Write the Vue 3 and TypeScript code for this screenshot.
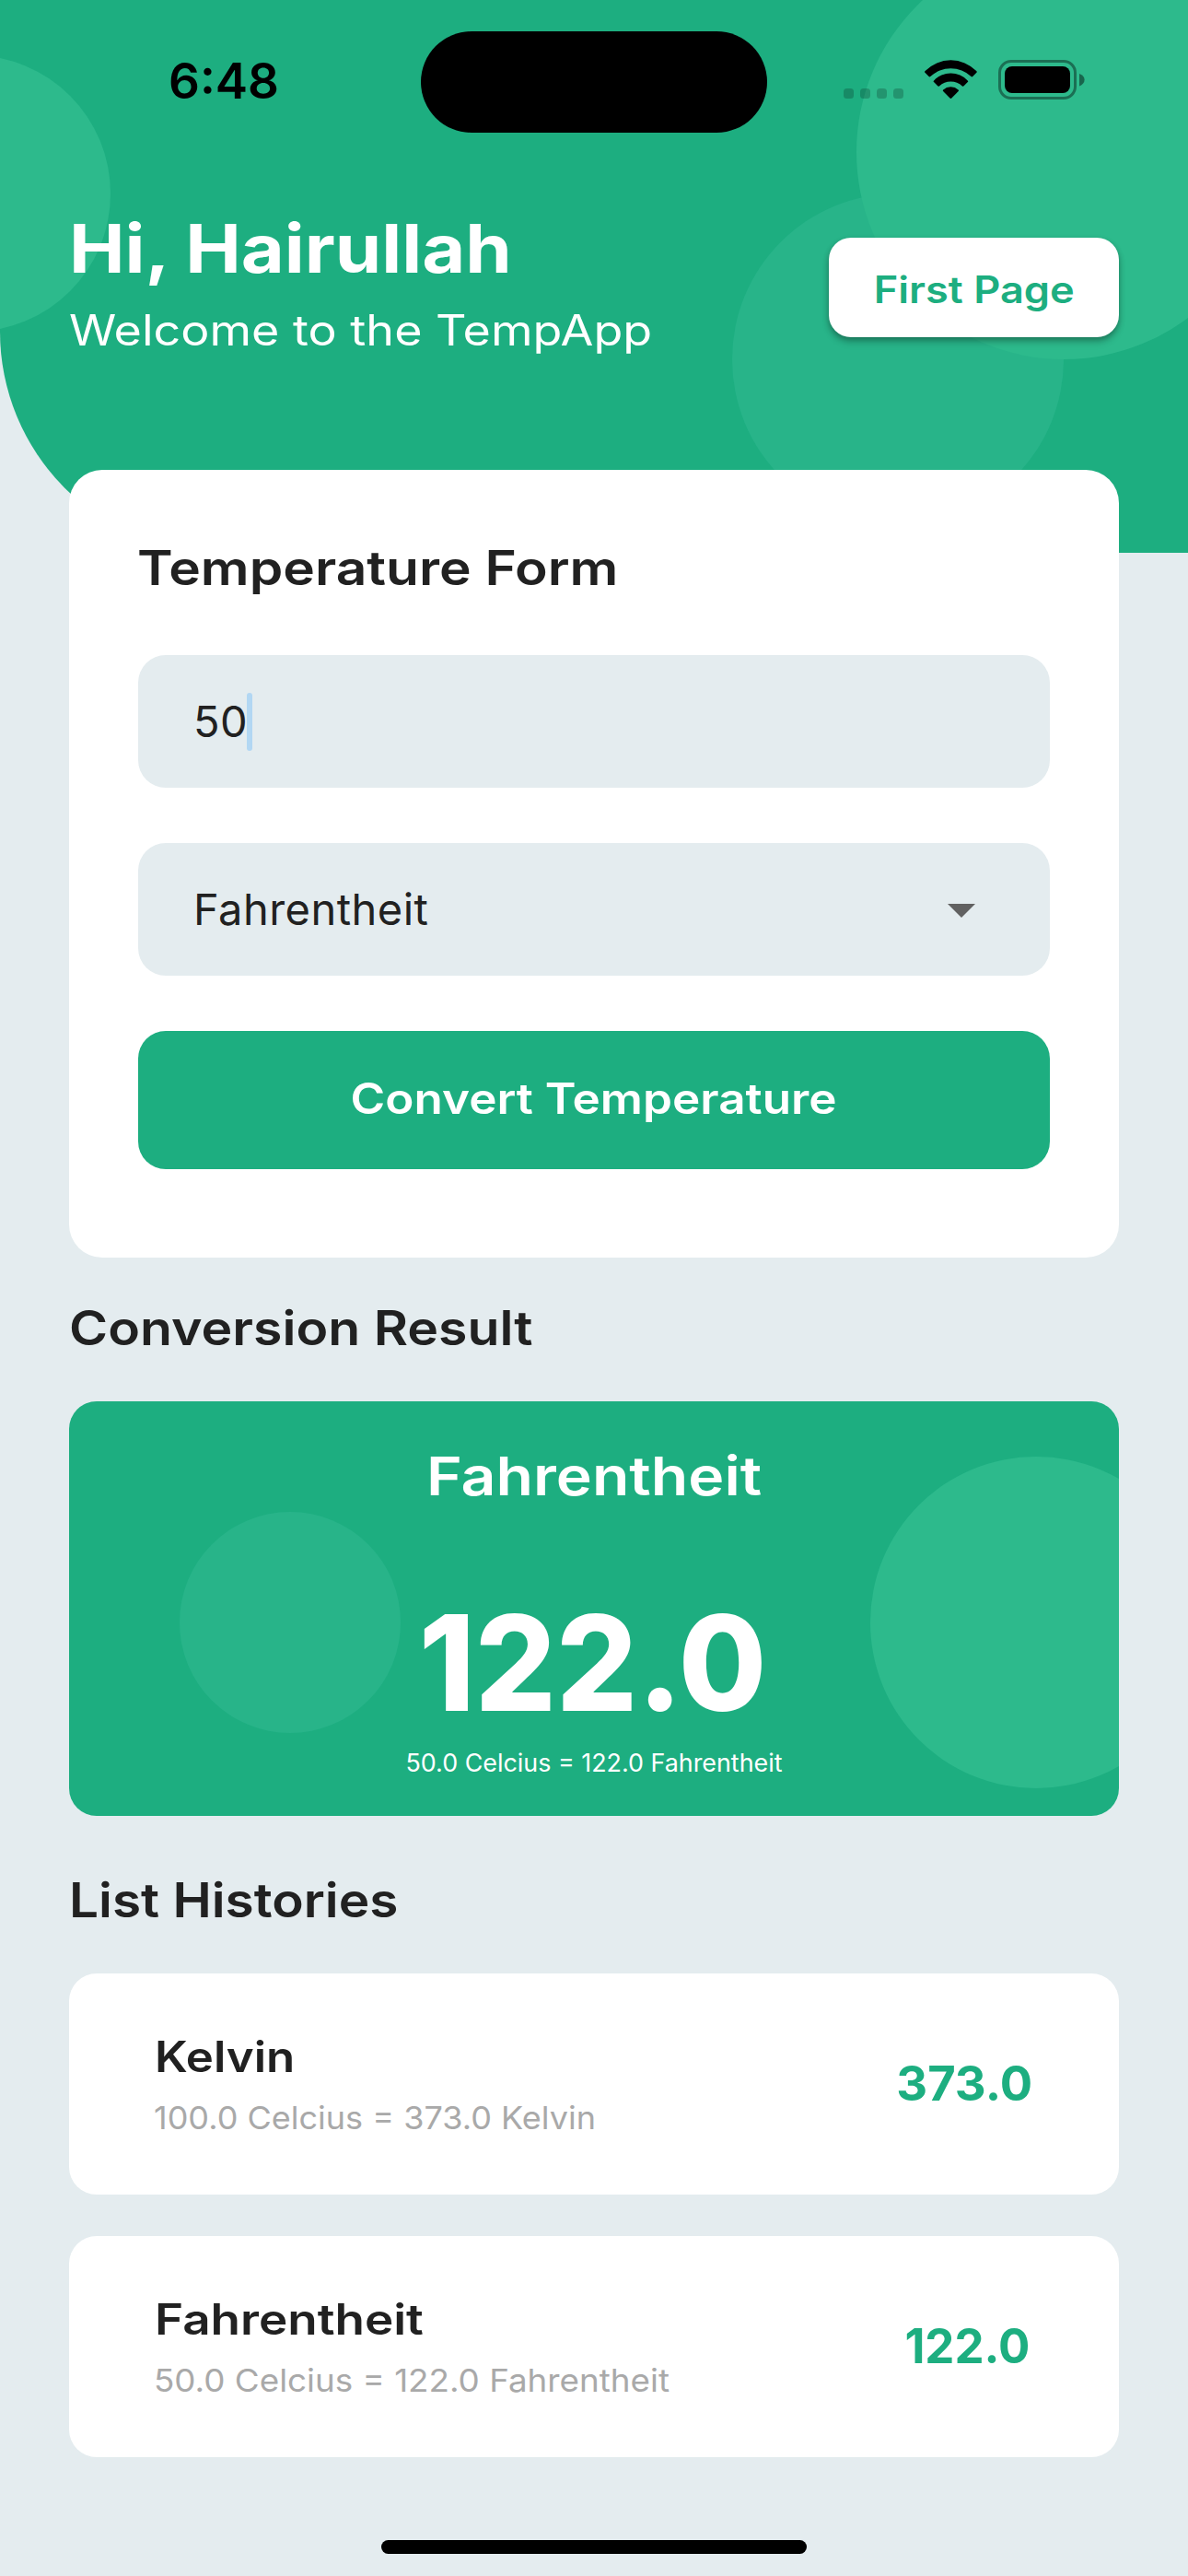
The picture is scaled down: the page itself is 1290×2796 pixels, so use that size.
<script setup lang="ts">
import { ref } from 'vue'

interface HistoryEntry {
  unit: string
  detail: string
  value: string
  unitStretch: number
  detailStretch: number
  valueStretch: number
}

const userName = ref<string>('Hairullah')
const amount = ref<string>('50')
const unit = ref<string>('Fahrentheit')
const result = ref<string>('122.0')
const resultDetail = ref<string>('50.0 Celcius = 122.0 Fahrentheit')

const histories = ref<HistoryEntry[]>([
  {
    unit: 'Kelvin',
    detail: '100.0 Celcius = 373.0 Kelvin',
    value: '373.0',
    unitStretch: 1.108,
    detailStretch: 1.044,
    valueStretch: 1.01,
  },
  {
    unit: 'Fahrentheit',
    detail: '50.0 Celcius = 122.0 Fahrentheit',
    value: '122.0',
    unitStretch: 1.152,
    detailStretch: 1.066,
    valueStretch: 0.98,
  },
])

const stretch = (factor: number) => ({ transform: `scaleX(${factor})` })
</script>

<template>
  <div class="screen">
    <div class="backdrop">
      <span class="bubble bubble-mid"></span>
      <span class="bubble bubble-top"></span>
      <span class="bubble bubble-left"></span>
    </div>

    <div class="status-bar">
      <span class="clock">6:48</span>
      <span class="island"></span>
      <div class="indicators">
        <svg class="signal" width="65" height="11" viewBox="0 0 65 11">
          <rect v-for="n in 4" :key="n" :x="(n - 1) * 18" y="0" width="11" height="11" rx="3.5" />
        </svg>
        <svg class="wifi" width="57" height="43" viewBox="0 0 57 43">
          <path d="M.6 12.1A38.7 38.7 0 0 1 56.2 12.1Q57.2 12.9 56.4 13.8L52.2 18Q51.4 18.8 50.5 18A32.3 32.3 0 0 0 6.3 18Q5.4 18.8 4.6 18L.4 13.8Q-.4 12.9 .6 12.1Z" />
          <path d="M10.1 22.4A25.3 25.3 0 0 1 46.7 22.4Q47.7 23.3 46.8 24.1L42.6 28.3Q41.8 29.2 40.9 28.4A18.4 18.4 0 0 0 15.9 28.4Q15 29.2 14.2 28.3L10 24.1Q9.1 23.3 10.1 22.4Z" />
          <path d="M20.2 32.4A12.4 12.4 0 0 1 36.6 32.4Q37.5 33.2 36.7 34.1L29.3 41.6Q28.4 42.5 27.5 41.6L20.1 34.1Q19.3 33.2 20.2 32.4Z" />
        </svg>
        <svg class="battery" width="94" height="43" viewBox="0 0 94 43">
          <rect x="1.5" y="1.5" width="82" height="40" rx="12.5" fill="none" stroke="#000" stroke-opacity=".4" stroke-width="3" />
          <rect x="7" y="7" width="71" height="29" rx="8" />
          <path d="M88 15Q93.6 17 93.6 21.5T88 28.5Z" fill-opacity=".45" />
        </svg>
      </div>
    </div>

    <header class="greeting">
      <div>
        <h1>Hi, {{ userName }}</h1>
        <p>Welcome to the TempApp</p>
      </div>
      <button class="page-button" type="button"><span>First Page</span></button>
    </header>

    <section class="form-card">
      <h2 class="form-title">Temperature Form</h2>
      <div class="field">
        <span class="amount">{{ amount }}</span>
        <span class="caret"></span>
      </div>
      <div class="field">
        <span class="unit">{{ unit }}</span>
        <svg class="arrow" width="30" height="15" viewBox="0 0 30 15"><path d="M0 0H30L15 15Z" /></svg>
      </div>
      <button class="convert-button" type="button"><span>Convert Temperature</span></button>
    </section>

    <h2 class="result-title">Conversion Result</h2>
    <section class="result-card">
      <span class="bubble bubble-small"></span>
      <span class="bubble bubble-right"></span>
      <div class="result-unit">{{ unit }}</div>
      <div class="result-value">{{ result }}</div>
      <div class="result-detail">{{ resultDetail }}</div>
    </section>

    <h2 class="list-title">List Histories</h2>
    <ul class="histories">
      <li v-for="entry in histories" :key="entry.unit" class="history">
        <div>
          <div class="history-unit" :style="stretch(entry.unitStretch)">{{ entry.unit }}</div>
          <div class="history-detail" :style="stretch(entry.detailStretch)">{{ entry.detail }}</div>
        </div>
        <div class="history-value" :style="stretch(entry.valueStretch)">{{ entry.value }}</div>
      </li>
    </ul>

    <div class="home-indicator"></div>
  </div>
</template>

<style>
body {
  margin: 0;
  background: #e4ecef;
}
</style>

<style scoped>
.screen {
  position: relative;
  width: 1290px;
  height: 2796px;
  overflow: hidden;
  display: flex;
  flex-direction: column;
  background: #e4ecef;
  color: #212121;
  font-family: Inter, "Open Sans", sans-serif;
  white-space: nowrap;
}

h1,
h2,
p,
ul {
  margin: 0;
  padding: 0;
  list-style: none;
}

button {
  border: 0;
  padding: 0;
  font-family: inherit;
  white-space: nowrap;
}

button span {
  display: inline-block;
}

/* Decorative header background, behind the page content */
.backdrop {
  position: absolute;
  top: 0;
  left: 0;
  width: 1290px;
  height: 600px;
  overflow: hidden;
  border-bottom-left-radius: 240px;
  background: #1dae80;
}

.bubble {
  position: absolute;
  border-radius: 50%;
  background: #2dba8c;
}

.bubble-top {
  top: -60px;
  left: 930px;
  width: 450px;
  height: 450px;
}

.bubble-mid {
  top: 210px;
  left: 795px;
  width: 360px;
  height: 360px;
  background: #28b489;
}

.bubble-left {
  top: 60px;
  left: -180px;
  width: 300px;
  height: 300px;
}

.status-bar {
  position: relative;
  flex: none;
  height: 144px;
  display: flex;
  align-items: flex-start;
}

.clock {
  width: 274px;
  margin: 58px 0 0 183px;
  color: #000;
  font-size: 53px;
  font-weight: 600;
  line-height: 60px;
}

.island {
  width: 376px;
  height: 110px;
  margin-top: 34px;
  border-radius: 55px;
  background: #000;
}

.indicators {
  display: flex;
  align-items: flex-end;
  height: 43px;
  margin: 65px 0 0 83px;
}

.signal {
  margin-bottom: 1px;
  opacity: 0.2;
}

.wifi,
.battery {
  margin-left: 23px;
}

.greeting {
  position: relative;
  flex: none;
  display: flex;
  justify-content: space-between;
  align-items: flex-start;
  height: 285px;
  padding: 81px 75px 0;
  color: #fff;
}

h1,
h2,
.greeting p,
.history-unit,
.history-detail {
  transform-origin: left center;
}

h1 {
  font-size: 73px;
  font-weight: 700;
  line-height: 90px;
  transform: scaleX(1.11);
}

.greeting p {
  margin-top: 14px;
  font-size: 46px;
  font-weight: 400;
  line-height: 58px;
  transform: scaleX(1.131);
}

.page-button {
  width: 315px;
  height: 108px;
  margin-top: 33px;
  padding-top: 4px;
  border-radius: 24px;
  background: #fff;
  color: #1dae80;
  font-size: 40.5px;
  font-weight: 600;
  box-shadow: 0 3px 6px rgba(0, 0, 0, 0.28), 0 6px 9px rgba(0, 0, 0, 0.12);
}

.page-button span {
  transform: scaleX(1.115);
}

h2 {
  font-size: 52px;
  font-weight: 600;
  line-height: 60px;
}

.form-card {
  position: relative;
  flex: none;
  display: flex;
  flex-direction: column;
  gap: 60px;
  height: 778px;
  margin: 0 75px;
  padding: 77px 75px 0;
  border-radius: 36px;
  background: #fff;
}

.form-title {
  margin: 0 0 4px -1px;
  transform: scaleX(1.128);
}

.field {
  height: 144px;
  display: flex;
  align-items: center;
  padding: 0 81px 0 60px;
  border-radius: 30px;
  background: #e4ecef;
  font-size: 47px;
}

.amount,
.unit {
  padding-bottom: 2px;
  letter-spacing: 0.01em;
}

.amount {
  width: 58px;
}

.caret {
  width: 6px;
  height: 63px;
  border-radius: 3px;
  background: #b2d7f3;
}

.arrow {
  margin-left: auto;
  margin-top: 3px;
  fill: #616161;
}

.convert-button {
  height: 150px;
  padding-bottom: 5px;
  border-radius: 30px;
  background: #1dae80;
  color: #fff;
  font-size: 46.5px;
  font-weight: 600;
}

.convert-button span {
  transform: scaleX(1.102);
}

.result-title {
  margin: 47px 75px 49px;
  transform: scaleX(1.1);
}

.result-card {
  position: relative;
  flex: none;
  height: 404px;
  margin: 0 75px;
  padding-top: 46px;
  overflow: hidden;
  border-radius: 30px;
  background: #1dae80;
  color: #fff;
  text-align: center;
}

.bubble-small {
  top: 120px;
  left: 120px;
  width: 240px;
  height: 240px;
  background: #28b489;
}

.bubble-right {
  top: 60px;
  left: 870px;
  width: 360px;
  height: 360px;
}

.result-unit,
.result-value,
.result-detail {
  position: relative;
}

.result-unit {
  font-size: 58px;
  font-weight: 600;
  line-height: 70px;
  transform: scaleX(1.14);
}

.result-value {
  margin-top: 93px;
  padding-right: 3px;
  font-size: 144px;
  font-weight: 800;
  line-height: 150px;
  transform: scaleX(0.96);
}

.result-detail {
  margin-top: 16px;
  font-size: 27px;
  line-height: 36px;
  transform: scaleX(0.995);
}

.list-title {
  margin: 62px 75px 49px;
  transform: scaleX(1.091);
}

.histories {
  display: flex;
  flex-direction: column;
  gap: 45px;
  margin: 0 75px;
}

.history {
  height: 240px;
  display: flex;
  align-items: center;
  justify-content: space-between;
  padding: 0 95px 0 93px;
  border-radius: 30px;
  background: #fff;
}

.history-unit {
  width: max-content;
  font-size: 46px;
  font-weight: 600;
  line-height: 56px;
}

.history-detail {
  width: max-content;
  margin: 17px 0 0 -1px;
  color: #a9a9a9;
  font-size: 34.5px;
  font-weight: 400;
  line-height: 44px;
}

.history-value {
  padding-bottom: 2px;
  color: #1dae80;
  font-size: 52px;
  font-weight: 700;
}

.home-indicator {
  width: 462px;
  height: 15px;
  margin: auto auto 24px;
  border-radius: 8px;
  background: #000;
}
</style>
